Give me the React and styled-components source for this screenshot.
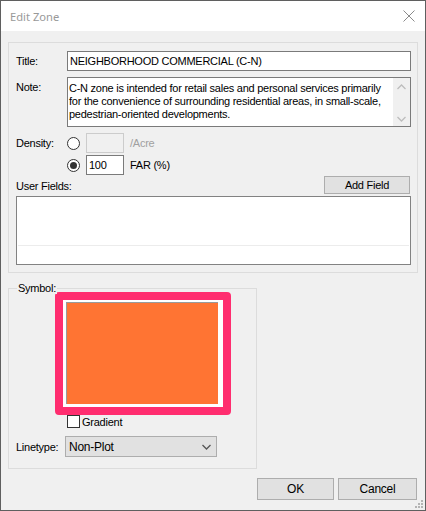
import React from "react"
import styled, { createGlobalStyle } from "styled-components"

const GlobalStyle = createGlobalStyle`
html, body {
  margin: 0;
  padding: 0;
  background: #f0f0f0;
}
* {
  box-sizing: border-box;
}
`

const Window = styled.div`
width: 426px;
height: 511px;
border: 1px solid #5f5f5f;
background: #f0f0f0;
position: relative;
display: flex;
flex-direction: column;
font-family: "Liberation Sans", Arial, sans-serif;
font-size: 11px;
letter-spacing: -0.25px;
color: #000;
`

const TitleBar = styled.div`
height: 30px;
background: #fff;
display: flex;
align-items: center;
justify-content: space-between;
padding: 0 10px 0 9px;
`

const TitleText = styled.div`
font-family: "Noto Sans", "Open Sans", sans-serif;
font-size: 11.2px;
letter-spacing: 0;
color: #999;
padding-top: 1px;
`

const Body = styled.div`
flex: 1;
display: flex;
flex-direction: column;
padding: 11px 7px 0 7px;
`

const Group = styled.div`
border: 1px solid #dcdcdc;
display: flex;
flex-direction: column;
padding: 8px 6px 7px 7px;
`

const Row = styled.div`
display: flex;
align-items: ${p => p.$top ? "flex-start" : "center"};
justify-content: ${p => p.$spread ? "space-between" : "flex-start"};
height: ${p => p.$h}px;
margin-bottom: ${p => p.$mb || 0}px;
`

const Label = styled.div`
width: ${p => p.$w || 51}px;
flex-shrink: 0;
white-space: nowrap;
padding-top: ${p => p.$pt || 0}px;
`

const TextBox = styled.div`
flex: ${p => p.$w ? "none" : 1};
width: ${p => p.$w ? p.$w + "px" : "auto"};
height: 100%;
border: 1px solid ${p => p.$disabled ? "#cccccc" : "#7a7a7a"};
background: ${p => p.$disabled ? "#f0f0f0" : "#fff"};
display: flex;
align-items: center;
padding: 0 2px;
white-space: nowrap;
`

const NoteBox = styled.div`
flex: 1;
height: 100%;
border: 1px solid #7a7a7a;
background: #fff;
display: flex;
`

const NoteText = styled.div`
flex: 1;
padding: 4px 1px;
line-height: 13px;
white-space: nowrap;
overflow: hidden;
`

const ScrollStrip = styled.div`
width: 17px;
background: #f0f0f0;
display: flex;
flex-direction: column;
justify-content: space-between;
align-items: center;
padding: 6px 0 4px;
`

const Radio = styled.div`
width: 13px;
height: 13px;
border-radius: 50%;
border: 1px solid #333;
background: #fff;
flex-shrink: 0;
margin-right: 6px;
display: flex;
align-items: center;
justify-content: center;
&::after {
  content: "";
  display: ${p => p.$checked ? "block" : "none"};
  width: 7px;
  height: 7px;
  border-radius: 50%;
  background: #333;
}
`

const Unit = styled.div`
margin-left: 6px;
color: ${p => p.$disabled ? "#a0a0a0" : "#000"};
`

const Button = styled.div`
width: ${p => p.$w}px;
height: ${p => p.$h}px;
margin-right: ${p => p.$mr || 0}px;
background: #e1e1e1;
border: 1px solid #adadad;
display: flex;
align-items: center;
justify-content: center;
font-size: ${p => p.$fs || 11}px;
`

const ListBox = styled.div`
height: 69px;
border: 1px solid #828282;
background: #fff;
padding-top: 48px;
`

const ListLine = styled.div`
height: 1px;
margin: 0 1px;
background: #ececec;
`

const SymbolGroup = styled(Group)`
position: relative;
width: 249px;
margin-top: 15px;
padding: 3px 7px 11px 7px;
`

const Legend = styled.div`
position: absolute;
top: -7px;
left: 8px;
padding: 0 1px;
background: #f0f0f0;
`

const Highlight = styled.div`
margin-left: 39px;
width: 176px;
border: 8px solid #ff2d6f;
border-radius: 4px;
`

const Swatch = styled.div`
height: 107px;
background: #fff;
padding: 2px 5px 3px 3px;
`

const SwatchFill = styled.div`
height: 100%;
background: #ff7433;
border-top: 1px solid #9a9a9a;
border-left: 1px solid #9a9a9a;
`

const CheckRow = styled.div`
display: flex;
align-items: center;
height: 13px;
margin-left: 51px;
`

const CheckBox = styled.div`
width: 13px;
height: 13px;
border: 1px solid #333;
background: #fff;
margin-right: 2px;
`

const Select = styled.div`
width: 152px;
height: 21px;
background: #e1e1e1;
border: 1px solid #adadad;
display: flex;
align-items: center;
justify-content: space-between;
padding: 0 5px 0 3px;
font-size: 12px;
`

const ButtonRow = styled.div`
display: flex;
justify-content: flex-end;
gap: 4px;
margin-top: 9px;
margin-right: 1px;
`

const Grip = styled.svg`
position: absolute;
right: 1px;
bottom: 1px;
`

function Chevron({ up, color = "#bdbdbd" }) {
    return (
        <svg width="9" height="6" viewBox="0 0 9 6">
            <path d={up ? "M0.5 5 L4.5 1 L8.5 5" : "M0.5 1 L4.5 5 L8.5 1"} fill="none" stroke={color} strokeWidth="1.3" />
        </svg>
    )
}

export default function App() {
    return (
        <Window>
            <GlobalStyle />
            <TitleBar>
                <TitleText>Edit Zone</TitleText>
                <svg width="12" height="12" viewBox="0 0 12 12">
                    <path d="M0.5 0.5 L11.5 11.5 M11.5 0.5 L0.5 11.5" stroke="#8a8a8a" strokeWidth="1" />
                </svg>
            </TitleBar>
            <Body>
                <Group>
                    <Row $h={20} $mb={6}>
                        <Label>Title:</Label>
                        <TextBox>NEIGHBORHOOD COMMERCIAL (C-N)</TextBox>
                    </Row>
                    <Row $h={50} $mb={6} $top>
                        <Label $pt={4}>Note:</Label>
                        <NoteBox>
                            <NoteText>
                                C-N zone is intended for retail sales and personal services primarily<br />
                                for the convenience of surrounding residential areas, in small-scale,<br />
                                pedestrian-oriented developments.
                            </NoteText>
                            <ScrollStrip>
                                <Chevron up />
                                <Chevron />
                            </ScrollStrip>
                        </NoteBox>
                    </Row>
                    <Row $h={20} $mb={2}>
                        <Label>Density:</Label>
                        <Radio />
                        <TextBox $w={38} $disabled />
                        <Unit $disabled>/Acre</Unit>
                    </Row>
                    <Row $h={20} $mb={1}>
                        <Label />
                        <Radio $checked />
                        <TextBox $w={38}>100</TextBox>
                        <Unit>FAR (%)</Unit>
                    </Row>
                    <Row $h={18} $mb={2} $spread>
                        <Label $pt={2}>User Fields:</Label>
                        <Button $w={86} $h={18} $mr={1}>Add Field</Button>
                    </Row>
                    <ListBox>
                        <ListLine />
                    </ListBox>
                </Group>

                <SymbolGroup>
                    <Legend>Symbol:</Legend>
                    <Highlight>
                        <Swatch>
                            <SwatchFill />
                        </Swatch>
                    </Highlight>
                    <CheckRow>
                        <CheckBox />
                        Gradient
                    </CheckRow>
                    <Row $h={21} style={{ marginTop: 8 }}>
                        <Label $w={49}>Linetype:</Label>
                        <Select>
                            Non-Plot
                            <Chevron color="#555" />
                        </Select>
                    </Row>
                </SymbolGroup>

                <ButtonRow>
                    <Button $w={77} $h={22} $fs={12}>OK</Button>
                    <Button $w={79} $h={22} $fs={12}>Cancel</Button>
                </ButtonRow>
            </Body>
            <Grip width="9" height="9" viewBox="0 0 9 9">
                <g fill="#b4b4b4">
                    <rect x="6" y="0" width="2" height="2" />
                    <rect x="3" y="3" width="2" height="2" />
                    <rect x="6" y="3" width="2" height="2" />
                    <rect x="0" y="6" width="2" height="2" />
                    <rect x="3" y="6" width="2" height="2" />
                    <rect x="6" y="6" width="2" height="2" />
                </g>
            </Grip>
        </Window>
    )
}
